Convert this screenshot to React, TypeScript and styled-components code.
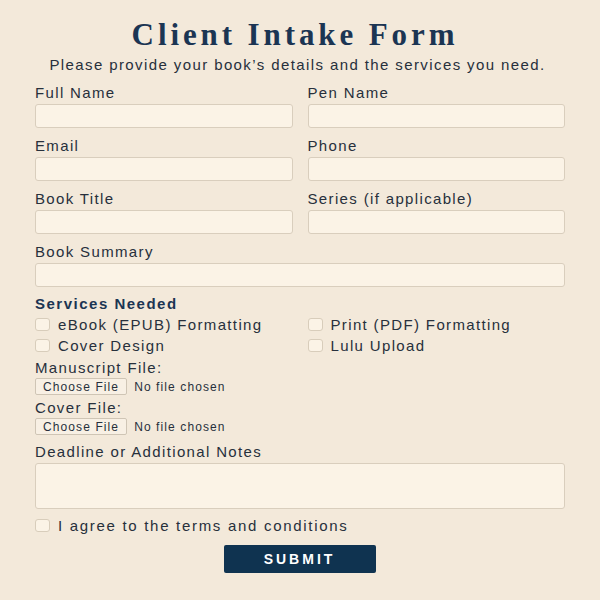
import styled, { createGlobalStyle } from 'styled-components';

const GlobalStyle = createGlobalStyle`
  html, body {
    margin: 0;
    padding: 0;
    background: #f3e9da;
  }
  body {
    font-family: "Liberation Sans", Arial, sans-serif;
    color: #27303c;
  }
`;

const StyledPage = styled.form`
  width: 530px;
  margin: 0 auto;
  padding: 17px 0 0 0;
  display: flex;
  flex-direction: column;
`;

const StyledTitle = styled.h1`
  margin: 0;
  padding-right: 10px;
  font-family: "Liberation Serif", "Times New Roman", serif;
  font-size: 31px;
  line-height: 36px;
  font-weight: 700;
  letter-spacing: 3.9px;
  color: #1b3553;
  text-align: center;
`;

const StyledSubtitle = styled.p`
  margin: 3px 0 10px 0;
  padding-right: 5px;
  font-size: 15px;
  line-height: 18px;
  letter-spacing: 1.4px;
  text-align: center;
  color: #27303c;
`;

const StyledGrid = styled.div`
  display: grid;
  grid-template-columns: 1fr 1fr;
  column-gap: 15px;
  row-gap: 9px;
`;

const StyledField = styled.label<{ $wide?: boolean }>`
  display: flex;
  flex-direction: column;
  gap: 2px;
  grid-column: ${(p) => (p.$wide ? '1 / -1' : 'auto')};
`;

const StyledLabel = styled.span`
  font-size: 15px;
  line-height: 18px;
  letter-spacing: 1.35px;
`;

const StyledInput = styled.input`
  box-sizing: border-box;
  height: 24px;
  width: 100%;
  margin: 0;
  background: #fbf3e6;
  border: 1px solid #d9cebd;
  border-radius: 3px;
  outline: none;
`;

const StyledTextArea = styled.textarea`
  box-sizing: border-box;
  height: 46px;
  width: 100%;
  margin: 0;
  background: #fbf3e6;
  border: 1px solid #d9cebd;
  border-radius: 3px;
  resize: none;
  outline: none;
`;

const StyledSectionTitle = styled.h2`
  margin: 8px 0 1px 0;
  font-size: 15px;
  line-height: 18px;
  font-weight: 700;
  letter-spacing: 1.5px;
  color: #1b3553;
`;

const StyledChecks = styled.div`
  display: grid;
  grid-template-columns: 1fr 1fr;
  column-gap: 15px;
  row-gap: 1px;
`;

const StyledCheckRow = styled.label`
  display: flex;
  align-items: center;
  gap: 8px;
  height: 20px;
  font-size: 15px;
  letter-spacing: 1.35px;
`;

const StyledCheckbox = styled.input.attrs({ type: 'checkbox' })`
  appearance: none;
  box-sizing: border-box;
  width: 15px;
  height: 13px;
  margin: 0;
  background: #fbf3e6;
  border: 1px solid #d8cdbb;
  border-radius: 3px;
  flex-shrink: 0;
`;

const StyledFileGroup = styled.label`
  display: flex;
  flex-direction: column;
  gap: 1px;
  margin-top: 4px;
`;

const StyledFileInput = styled.input.attrs({ type: 'file' })`
  font-family: "Liberation Sans", Arial, sans-serif;
  font-size: 12px;
  letter-spacing: 1.1px;
  color: #27303c;
  height: 17px;

  &::file-selector-button {
    font-family: inherit;
    font-size: 12px;
    letter-spacing: 1.1px;
    color: #27303c;
    height: 17px;
    padding: 0 7px;
    margin-right: 7px;
    background: #f8f0e4;
    border: 1px solid #cfc5b5;
    border-radius: 2px;
  }
`;

const StyledNotes = styled.label`
  display: flex;
  flex-direction: column;
  gap: 2px;
  margin-top: 8px;
`;

const StyledAgree = styled(StyledCheckRow)`
  margin-top: 6px;
  letter-spacing: 1.7px;
`;

const StyledSubmit = styled.button`
  align-self: center;
  margin-top: 10px;
  width: 152px;
  height: 28px;
  background: #0f3350;
  color: #ffffff;
  border: none;
  border-radius: 2px;
  font-family: "Liberation Sans", Arial, sans-serif;
  font-size: 14px;
  font-weight: 700;
  letter-spacing: 3px;
  padding-left: 5px;
  cursor: pointer;
`;

const fields = [
  { label: 'Full Name' },
  { label: 'Pen Name' },
  { label: 'Email' },
  { label: 'Phone' },
  { label: 'Book Title' },
  { label: 'Series (if applicable)' },
  { label: 'Book Summary', wide: true },
];

const services = [
  'eBook (EPUB) Formatting',
  'Print (PDF) Formatting',
  'Cover Design',
  'Lulu Upload',
];

export default function App() {
  return (
    <>
      <GlobalStyle />
      <StyledPage onSubmit={(e) => e.preventDefault()}>
        <StyledTitle>Client Intake Form</StyledTitle>
        <StyledSubtitle>
          Please provide your book’s details and the services you need.
        </StyledSubtitle>
        <StyledGrid>
          {fields.map((f) => (
            <StyledField key={f.label} $wide={f.wide}>
              <StyledLabel>{f.label}</StyledLabel>
              <StyledInput type="text" />
            </StyledField>
          ))}
        </StyledGrid>
        <StyledSectionTitle>Services Needed</StyledSectionTitle>
        <StyledChecks>
          {services.map((s) => (
            <StyledCheckRow key={s}>
              <StyledCheckbox />
              {s}
            </StyledCheckRow>
          ))}
        </StyledChecks>
        <StyledFileGroup>
          <StyledLabel>Manuscript File:</StyledLabel>
          <StyledFileInput />
        </StyledFileGroup>
        <StyledFileGroup>
          <StyledLabel>Cover File:</StyledLabel>
          <StyledFileInput />
        </StyledFileGroup>
        <StyledNotes>
          <StyledLabel>Deadline or Additional Notes</StyledLabel>
          <StyledTextArea />
        </StyledNotes>
        <StyledAgree>
          <StyledCheckbox />
          I agree to the terms and conditions
        </StyledAgree>
        <StyledSubmit type="submit">SUBMIT</StyledSubmit>
      </StyledPage>
    </>
  );
}
